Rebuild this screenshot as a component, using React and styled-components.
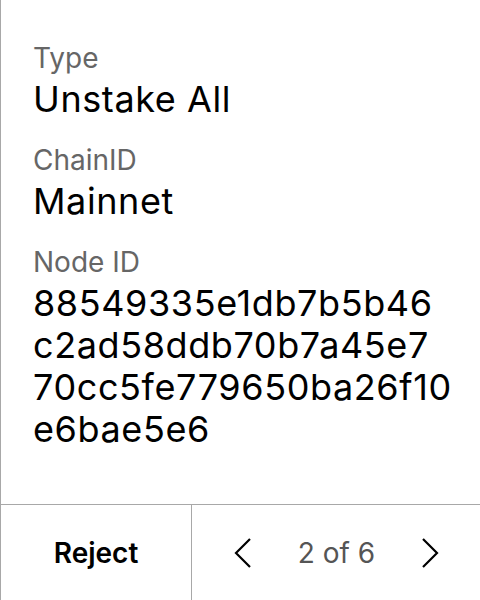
import React from "react"
import styled, { createGlobalStyle } from "styled-components"

const GlobalStyle = createGlobalStyle`
  html, body {
    margin: 0;
    padding: 0;
    background: #fff;
  }
  body {
    font-family: "Inter", "Noto Sans", sans-serif;
  }
`

const Screen = styled.div`
  width: 480px;
  height: 600px;
  display: flex;
  flex-direction: column;
  border-left: 1px solid #a8a8a8;
  box-sizing: border-box;
  color: #000;
`

const Details = styled.div`
  flex: 1;
  padding: 42px 0 0 32px;
  display: flex;
  flex-direction: column;
  gap: 24px;
`

const Field = styled.div`
  display: flex;
  flex-direction: column;
  gap: 4px;
`

const Label = styled.div`
  font-size: 28px;
  line-height: 32px;
  color: #666;
`

const Value = styled.div`
  font-size: 36px;
  line-height: 42px;
  letter-spacing: 0.6px;
  color: #000;
`

const Line = styled.span`
  display: block;
`

const Footer = styled.div`
  height: 95px;
  display: grid;
  grid-template-columns: 191px 1fr;
  border-top: 1px solid #a8a8a8;
`

const RejectButton = styled.button`
  border: none;
  border-right: 1px solid #a8a8a8;
  background: none;
  font-family: inherit;
  font-size: 28px;
  font-weight: 600;
  color: #000;
  padding: 0;
`

const Pager = styled.div`
  display: flex;
  align-items: center;
  justify-content: space-between;
  padding: 0 41px 0 42px;
`

const Arrow = styled.button`
  border: none;
  background: none;
  padding: 0;
  display: flex;
  align-items: center;
`

const PageText = styled.span`
  font-size: 28px;
  color: #555;
`

const Chevron = ({ dir }) => (
  <svg width="18" height="32" viewBox="0 0 18 32" fill="none">
    <path
      d={dir === "left" ? "M16 2 L2 16 L16 30" : "M2 2 L16 16 L2 30"}
      stroke="#000"
      strokeWidth="2.2"
    />
  </svg>
)

const fields = [
  { label: "Type", lines: ["Unstake All"] },
  { label: "ChainID", lines: ["Mainnet"] },
  {
    label: "Node ID",
    lines: ["88549335e1db7b5b46", "c2ad58ddb70b7a45e7", "70cc5fe779650ba26f10", "e6bae5e6"],
  },
]

const App = () => (
  <>
    <GlobalStyle />
    <Screen>
      <Details>
        {fields.map(f => (
          <Field key={f.label}>
            <Label>{f.label}</Label>
            <Value>
              {f.lines.map(l => (
                <Line key={l}>{l}</Line>
              ))}
            </Value>
          </Field>
        ))}
      </Details>
      <Footer>
        <RejectButton>Reject</RejectButton>
        <Pager>
          <Arrow><Chevron dir="left" /></Arrow>
          <PageText>2 of 6</PageText>
          <Arrow><Chevron dir="right" /></Arrow>
        </Pager>
      </Footer>
    </Screen>
  </>
)

export default App
